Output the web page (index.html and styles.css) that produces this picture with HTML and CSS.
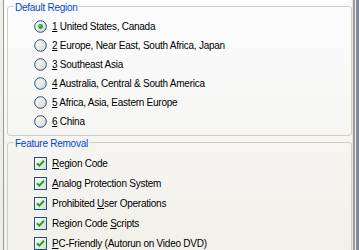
FILE: index.html
```html
<!DOCTYPE html>
<html lang="en">
<head>
    <meta charset="UTF-8">
    <title>Region Settings</title>
    <link rel="stylesheet" href="styles.css">
</head>
<body>
    <div class="page">
        <div class="edge-left"></div>
        <div class="content">
            <fieldset class="group group-region">
                <legend>Default Region</legend>
                <ul class="options">
                    <li class="option">
                        <svg class="radio" width="13" height="13" viewBox="0 0 13 13">
                            <defs>
                                <linearGradient id="rfill" x1="0" y1="0" x2="1" y2="1">
                                    <stop offset="0" stop-color="#ffffff"/>
                                    <stop offset="1" stop-color="#d4d4cc"/>
                                </linearGradient>
                            </defs>
                            <circle cx="6.5" cy="6.5" r="5.8" fill="url(#rfill)" stroke="#1c5180" stroke-width="1"/>
                            <circle cx="6.5" cy="6.5" r="2.4" fill="#21a121"/>
                            <circle cx="6" cy="6" r="0.9" fill="#7fd77f"/>
                        </svg>
                        <span><u>1</u> United States, Canada</span>
                    </li>
                    <li class="option">
                        <svg class="radio" width="13" height="13" viewBox="0 0 13 13"><circle cx="6.5" cy="6.5" r="5.8" fill="url(#rfill)" stroke="#1c5180" stroke-width="1"/></svg>
                        <span><u>2</u> Europe, Near East, South Africa, Japan</span>
                    </li>
                    <li class="option">
                        <svg class="radio" width="13" height="13" viewBox="0 0 13 13"><circle cx="6.5" cy="6.5" r="5.8" fill="url(#rfill)" stroke="#1c5180" stroke-width="1"/></svg>
                        <span><u>3</u> Southeast Asia</span>
                    </li>
                    <li class="option">
                        <svg class="radio" width="13" height="13" viewBox="0 0 13 13"><circle cx="6.5" cy="6.5" r="5.8" fill="url(#rfill)" stroke="#1c5180" stroke-width="1"/></svg>
                        <span><u>4</u> Australia, Central &amp; South America</span>
                    </li>
                    <li class="option">
                        <svg class="radio" width="13" height="13" viewBox="0 0 13 13"><circle cx="6.5" cy="6.5" r="5.8" fill="url(#rfill)" stroke="#1c5180" stroke-width="1"/></svg>
                        <span><u>5</u> Africa, Asia, Eastern Europe</span>
                    </li>
                    <li class="option">
                        <svg class="radio" width="13" height="13" viewBox="0 0 13 13"><circle cx="6.5" cy="6.5" r="5.8" fill="url(#rfill)" stroke="#1c5180" stroke-width="1"/></svg>
                        <span><u>6</u> China</span>
                    </li>
                </ul>
            </fieldset>

            <fieldset class="group group-features">
                <legend>Feature Removal</legend>
                <ul class="options checks">
                    <li class="option">
                        <svg class="check" width="13" height="13" viewBox="0 0 13 13">
                            <defs>
                                <linearGradient id="cfill" x1="0" y1="0" x2="1" y2="1">
                                    <stop offset="0" stop-color="#ffffff"/>
                                    <stop offset="1" stop-color="#d8d8d0"/>
                                </linearGradient>
                            </defs>
                            <rect x="0.5" y="0.5" width="12" height="12" fill="url(#cfill)" stroke="#1c5180"/>
                            <path d="M3 6.2 L5.3 8.6 L10 3.8" fill="none" stroke="#21a121" stroke-width="2"/>
                        </svg>
                        <span><u>R</u>egion Code</span>
                    </li>
                    <li class="option">
                        <svg class="check" width="13" height="13" viewBox="0 0 13 13"><rect x="0.5" y="0.5" width="12" height="12" fill="url(#cfill)" stroke="#1c5180"/><path d="M3 6.2 L5.3 8.6 L10 3.8" fill="none" stroke="#21a121" stroke-width="2"/></svg>
                        <span><u>A</u>nalog Protection System</span>
                    </li>
                    <li class="option">
                        <svg class="check" width="13" height="13" viewBox="0 0 13 13"><rect x="0.5" y="0.5" width="12" height="12" fill="url(#cfill)" stroke="#1c5180"/><path d="M3 6.2 L5.3 8.6 L10 3.8" fill="none" stroke="#21a121" stroke-width="2"/></svg>
                        <span>Prohibited <u>U</u>ser Operations</span>
                    </li>
                    <li class="option">
                        <svg class="check" width="13" height="13" viewBox="0 0 13 13"><rect x="0.5" y="0.5" width="12" height="12" fill="url(#cfill)" stroke="#1c5180"/><path d="M3 6.2 L5.3 8.6 L10 3.8" fill="none" stroke="#21a121" stroke-width="2"/></svg>
                        <span>Region Code <u>S</u>cripts</span>
                    </li>
                    <li class="option">
                        <svg class="check" width="13" height="13" viewBox="0 0 13 13"><rect x="0.5" y="0.5" width="12" height="12" fill="url(#cfill)" stroke="#1c5180"/><path d="M3 6.2 L5.3 8.6 L10 3.8" fill="none" stroke="#21a121" stroke-width="2"/></svg>
                        <span><u>P</u>C-Friendly (Autorun on Video DVD)</span>
                    </li>
                </ul>
            </fieldset>
        </div>
        <div class="edge-right"></div>
    </div>
</body>
</html>
```

FILE: styles.css
```css
html, body {
    margin: 0;
    height: 100%;
    overflow: hidden;
}
body {
    font-family: "Liberation Sans", Arial, sans-serif;
    font-size: 10px;
    letter-spacing: -0.25px;
    color: #000;
    background: #f0f0ea;
}
.page {
    display: flex;
    height: 250px;
    background: linear-gradient(#fcfcfe, #f1f0ea);
}
.edge-left {
    width: 3px;
    background: #eeede8;
    border-right: 1px solid #919b9c;
}
.content {
    flex: 1;
    padding: 0 0 0 3px;
    display: flex;
    flex-direction: column;
}
.edge-right {
    width: 7px;
    background: linear-gradient(to right,
        #e2e1d9 0, #e2e1d9 1px,
        #9f9f9f 1px, #9f9f9f 3px,
        #d8d8d8 3px, #f4f4f4 4px,
        #8e919c 4px, #8e919c 5px,
        #7c86a6 5px, #7c86a6 7px);
}
.group {
    margin: 0;
    padding: 4px 0 4px 26px;
    border: 1px solid #d0d0bf;
    border-radius: 3px;
    min-width: 0;
}
.group legend {
    margin-left: -20px;
    padding: 2px 1px 0;
    line-height: 11px;
    color: #0046d5;
}
.options {
    list-style: none;
    margin: 0;
    padding: 0;
}
.option {
    display: flex;
    align-items: center;
    gap: 5px;
    height: 19px;
    white-space: nowrap;
}
.checks .option {
    height: 20px;
}
.radio, .check {
    flex: none;
}
```
